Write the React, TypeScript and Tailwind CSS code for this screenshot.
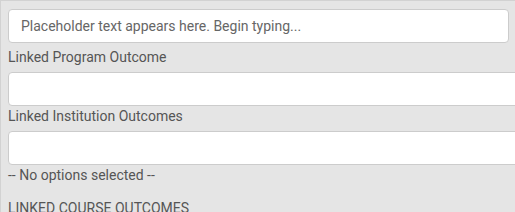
export default function App() {
  return (
    <div className="h-[212px] w-[515px] overflow-hidden bg-white font-['Roboto',sans-serif] text-[14px] leading-[20px] text-[#555]">
      <div className="h-[260px] w-[560px] border-l border-t border-[#d2d2d2] bg-[#e5e5e5] px-[7px] pt-[8px]">
        <input
          className="block h-[34px] w-[501px] rounded-[4px] border border-[#ccc] bg-white px-[12px] text-[14px] text-[#555] placeholder:text-[#666] outline-none"
          placeholder="Placeholder text appears here. Begin typing..."
        />
        <label className="mt-[4px] mb-[5px] block">Linked Program Outcome</label>
        <div className="h-[34px] w-[540px] rounded-l-[4px] border border-[#ccc] bg-white" />
        <label className="mb-[5px] block">Linked Institution Outcomes</label>
        <div className="h-[34px] w-[540px] rounded-l-[4px] border border-[#ccc] bg-white" />
        <p>-- No options selected --</p>
        <p className="mt-[13px] uppercase">Linked Course Outcomes</p>
      </div>
    </div>
  );
}
